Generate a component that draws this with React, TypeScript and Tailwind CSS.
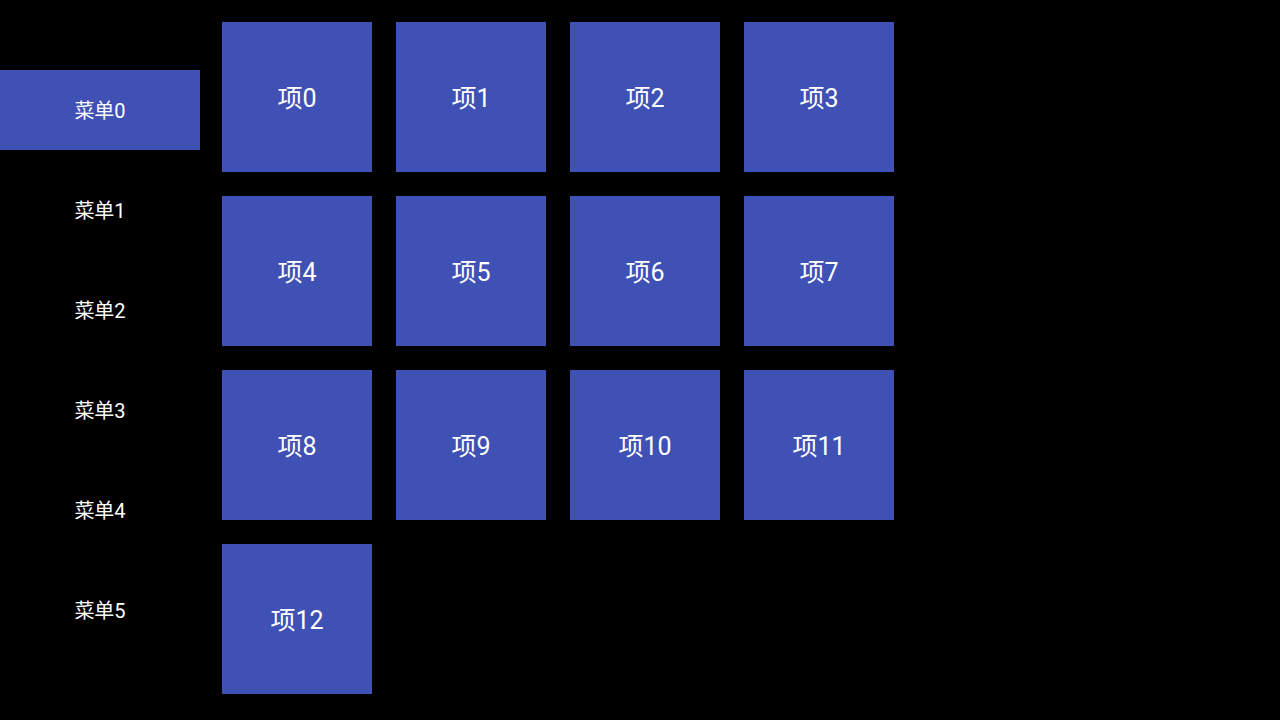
const menus = ['菜单0', '菜单1', '菜单2', '菜单3', '菜单4', '菜单5'];
const items = Array.from({ length: 13 }, (_, i) => `项${i}`);

export default function App() {
  return (
    <div
      className="flex h-[720px] w-[1280px] overflow-hidden bg-black text-white"
      style={{ fontFamily: 'Roboto, "Noto Sans CJK SC", sans-serif' }}
    >
      <div className="flex w-[200px] flex-col pt-[60px]">
        {menus.map((m, i) => (
          <div key={m} className="flex h-[100px] items-center">
            <div
              className={`flex h-[80px] w-full items-center justify-center pt-[2px] text-[20px] ${
                i === 0 ? 'bg-[#3f51b5]' : ''
              }`}
            >
              {m}
            </div>
          </div>
        ))}
      </div>
      <div className="grid grid-cols-[repeat(4,150px)] content-start gap-[24px] pl-[22px] pt-[22px]">
        {items.map((it) => (
          <div
            key={it}
            className="flex h-[150px] w-[150px] items-center justify-center bg-[#3f51b5] pt-[3px] text-[25px]"
          >
            {it}
          </div>
        ))}
      </div>
    </div>
  );
}
